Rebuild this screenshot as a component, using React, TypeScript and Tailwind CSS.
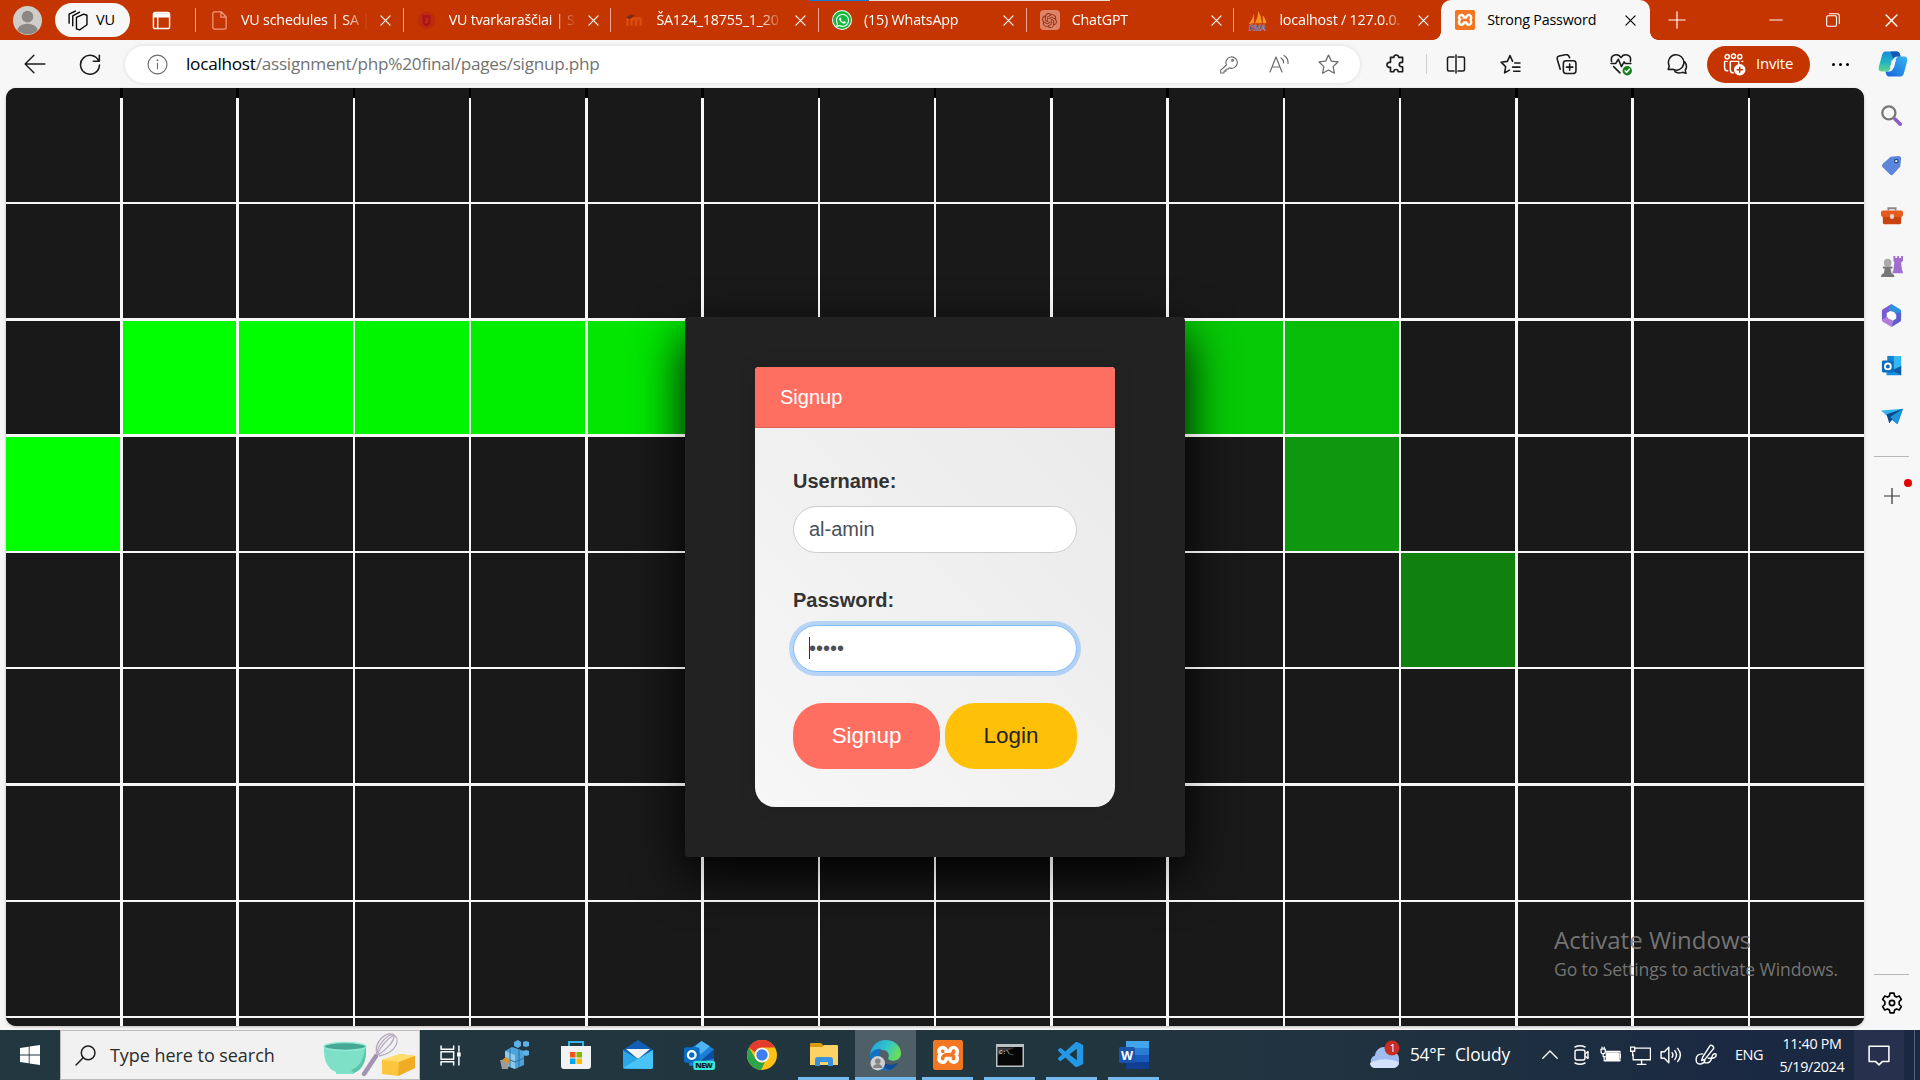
import React from "react";
import { FaWhatsapp } from "react-icons/fa";
import { VscVscode } from "react-icons/vsc";
import { SiOpenai, SiXampp } from "react-icons/si";

type P = { children?: React.ReactNode; s?: number; w?: number; className?: string; box?: string };

function Line({ children, s = 20, w = 1.4, className = "", box = "0 0 20 20" }: P) {
  return (
    <svg width={s} height={s} viewBox={box} fill="none" stroke="currentColor" strokeWidth={w} strokeLinecap="round" strokeLinejoin="round" className={`shrink-0 ${className}`}>
      {children}
    </svg>
  );
}

function Art({ children, s = 24, box = "0 0 24 24", className = "" }: P) {
  return (
    <svg width={s} height={s} viewBox={box} className={`shrink-0 ${className}`}>
      {children}
    </svg>
  );
}

const X = ({ s = 11 }: { s?: number }) => (
  <Line s={s} w={1.3} box="0 0 12 12"><path d="M1 1l10 10M11 1L1 11" /></Line>
);

const Xampp = ({ s }: { s: number }) => (
  <span className="grid place-items-center rounded-[3px] bg-[radial-gradient(circle,#fff_58%,#f37623_60%)]">
    <SiXampp size={s} color="#f37623" />
  </span>
);

const tabs = [
  {
    title: "VU schedules | SA |",
    icon: <Line s={19} w={1.3} className="text-[#ef9a80]"><path d="M4 1h8l5 5v11.500a1.500 1.500 0 0 1-1.500 1.500h-11A1.500 1.500 0 0 1 3 17.500v-15A1.500 1.500 0 0 1 4.500 1zM11.500 1v5.500H17" /></Line>,
  },
  {
    title: "VU tvarkaraščiai | S",
    icon: <Art s={19}><circle cx="12" cy="12" r="11" fill="#bd2a0c" /><path d="M7 5h10v8c0 4-2 5-5 7-3-2-5-3-5-7z" fill="#a8141b" /><path d="M9.500 8l3 1 2-1v6l-3 2-2-2 2-2z" fill="#c32b1c" /></Art>,
  },
  {
    title: "ŠA124_18755_1_20",
    icon: <Art s={20}><path d="M4 19v-6c0-4 5-4 5 0v6M9 19v-6c0-4 5.500-4 5.500 0v6M14.500 19v-6c0-4 5.500-4 5.500 0v6" fill="none" stroke="#dd4b0d" strokeWidth="3" /><path d="M2 9l7-4 4 2-6 4z" fill="#7b2c14" /></Art>,
  },
  {
    title: "(15) WhatsApp",
    icon: <span className="grid size-5 place-items-center rounded-full bg-white"><span className="grid size-[18px] place-items-center rounded-full bg-[#12b93d] text-white"><FaWhatsapp size={15} /></span></span>,
  },
  { title: "ChatGPT", icon: <span className="grid size-5 place-items-center rounded bg-[#df8469] text-[#8f3018]"><SiOpenai size={15} /></span> },
  {
    title: "localhost / 127.0.0.",
    icon: <Art s={21}><path d="M2 16Q7 10 8 4v11zM9 15Q13 8 13 1q4 7 4 14zM18 15V6q4 5 4 9z" fill="#f6921e" /><text x="2" y="23.500" fontSize="10" fontWeight="700" fontStyle="italic" fontFamily="Liberation Sans" textLength="20" fill="#3f4173" stroke="#d9d3e0" strokeWidth="0.300">PMA</text></Art>,
  },
];

function TabBar() {
  return (
    <header className="relative flex h-10 shrink-0 items-center bg-[#c43501] text-white">
      <div className="absolute top-0 left-[809px] flex h-px w-[301px] bg-[#e6dbd6]"><i className="w-[60px] bg-[#1477d4]" /></div>
      <Art s={29} box="0 0 30 30" className="ml-[13px]">
        <circle cx="15" cy="15" r="15" fill="#cfcdca" /><circle cx="15" cy="11" r="6" fill="#8b8784" />
        <path d="M4.500 25c1-9 20-9 21 0A15 15 0 0 1 4.500 25z" fill="#8b8784" />
      </Art>
      <div className="ml-[13px] flex h-[34px] w-[75px] items-center gap-2 rounded-full bg-[#f7f7f7] pl-3 text-[14.500px] text-black">
        <Line s={21} w={1.3}><path d="M9 7l7-3 3 1v9l-7 5-3-1zM9 7v11M5.500 15V5.500L12 2M2 12.500V4l6-3" /></Line>
        <span className="tracking-[-0.200px]">VU</span>
      </div>
      <Line s={19} w={1.5} className="ml-[22px]"><rect x="1.500" y="1.500" width="17" height="17" rx="2" /><path d="M2 3h16v3H2z" fill="currentColor" /><path d="M6 6v12" /></Line>
      <div className="ml-[24px] flex h-full">
        {tabs.map((t) => (
          <div key={t.title} className="flex h-full w-[207.700px] items-center">
            <i className="h-6 w-px bg-[#e9a893]" />
            <span className="ml-3 grid w-[22px] shrink-0 place-items-center">{t.icon}</span>
            <span className="ml-[11px] w-[133px] overflow-hidden pb-px text-[14.300px] tracking-[-0.200px] whitespace-nowrap [mask-image:linear-gradient(to_right,#000_103px,transparent_128px)]">{t.title}</span>
            <span className="ml-1.5"><X /></span>
          </div>
        ))}
      </div>
      <div className="relative flex h-10 w-[209px] items-center rounded-t-[10px] bg-[#f7f7f7] text-black">
        <i className="absolute bottom-0 -left-2 size-2 bg-[radial-gradient(circle_at_0_0,transparent_7.500px,#f7f7f7_8px)]" />
        <i className="absolute -right-2 bottom-0 size-2 bg-[radial-gradient(circle_at_100%_0,transparent_7.500px,#f7f7f7_8px)]" />
        <span className="ml-[14px]"><Xampp s={20} /></span>
        <span className="ml-3 w-[130px] pb-px text-[14.300px] tracking-[-0.200px] whitespace-nowrap">Strong Password</span>
        <span className="ml-[8px]"><X /></span>
      </div>
      <Line s={18} w={1.3} className="ml-[18px]"><path d="M10 1v18M1 10h18" /></Line>
      <Line s={14} w={1.4} className="ml-[83px]"><path d="M1 10h18" /></Line>
      <Line s={14} w={1.6} className="ml-[43px]"><rect x="1" y="4" width="14" height="15" rx="2" /><path d="M5 1h11q3 0 3 3v11" /></Line>
      <span className="ml-[45px]"><X s={13} /></span>
    </header>
  );
}

const slot = "grid h-8 w-[55.300px] place-items-center";

function AddressBar() {
  return (
    <div className="flex h-12 shrink-0 items-center bg-[#f7f7f7] text-[#1b1b1b]">
      <Line s={22} w={1.3} className="ml-[24px]"><path d="M19 10H1M9 2l-8 8 8 8" /></Line>
      <Line s={22} w={1.4} className="ml-[33px]"><path d="M18 7.500A8.600 8.600 0 1 0 18.600 11M18.500 2v5.500H13" /></Line>
      <div className="ml-[24px] flex h-[37px] w-[1235px] items-center rounded-full bg-white text-[#6b6b6b] shadow-[0_0_4px_rgba(0,0,0,.12)]">
        <Line s={21} w={1.1} className="ml-[22px]"><circle cx="10" cy="10" r="9" /><path d="M10 9v5" /><circle cx="10" cy="6" r=".4" /></Line>
        <div className="ml-[18px] flex-1 text-[17.200px] tracking-[-0.260px] whitespace-nowrap text-[#737373]"><span className="text-black">localhost</span>/assignment/php%20final/pages/signup.php</div>
        <Line s={19} w={1.2} className="mr-[31px]"><path d="M7.500 10.500a6 6 0 1 1 3 3L9 15H7v2H5v2H1.500v-3z" transform="translate(.3 0)" /><circle cx="14.300" cy="5.500" r="1" /></Line>
        <Line s={20} w={1.2} className="mr-[29px]"><path d="M1 18L7 3l6 15M3 13h8M12 4q3 2 2.500 5M15 1.500q4.500 3 4 8" /></Line>
        <Line s={21} w={1.2} className="mr-[21px]"><path d="M10 1l2.700 5.800 6.300.8-4.600 4.400 1.200 6.300L10 15.200l-5.600 3.100L5.600 12 1 7.600l6.300-.8z" /></Line>
      </div>
      <Line s={22} w={1.5} className="ml-[25px]"><path d="M5 4h3a2.200 2.200 0 1 1 4.400 0H16v4.500h-1a2 2 0 1 0 0 4h1V17h-4a2 2 0 1 0-4 0H5v-4H4a2.200 2.200 0 1 1 0-4.500h1z" /></Line>
      <i className="ml-[19px] h-5 w-px bg-[#cfcfcf]" />
      <div className="ml-px flex items-center">
        <span className={slot}><Line s={20} w={1.5}><path d="M8 3H3a1.500 1.500 0 0 0-1.500 1.500v11A1.500 1.500 0 0 0 3 17h5M12 3h5a1.500 1.500 0 0 1 1.500 1.500v11A1.500 1.500 0 0 1 17 17h-5M10 1v18" /></Line></span>
        <span className={slot}><Line s={21} w={1.5}><path d="M12 7L9.500 1.500 7 7l-6 .8 4.400 4.200-1 6L9 15.300M14 8.500h5M12 12.500h7M13 16.500h6" /></Line></span>
        <span className={slot}><Line s={21} w={1.5}><rect x="7" y="6.500" width="12" height="12" rx="2.500" /><path d="M13 9.500v6M10 12.500h6M4 14.500L1.200 5A2.500 2.500 0 0 1 3 2l7-1.500q2 0 3 3" /></Line></span>
        <span className={slot}>
          <Line s={23} w={1.5} box="0 0 22 22"><path d="M1.500 8C0 1 8 0 10.500 4.500 13 0 21 1 19.500 8M1 10h4.500L8 6l3 7 2.500-4.500 1 1.500H20M3.500 13l6 6" /><circle cx="16.500" cy="17" r="4.500" fill="#13801a" stroke="none" /><path d="M14.500 17l1.500 1.500 2.500-3" stroke="#fff" /></Line>
        </span>
        <span className={slot}><Line s={22} w={1.4}><path d="M2 15l1-3.200A7 7 0 1 1 6 14.800zM17 8q3 4 .5 7.500l.7 3-3.500-.9Q11 19 8 17" /></Line></span>
      </div>
      <div className="ml-[2.500px] flex h-[37px] w-[103px] items-center rounded-full bg-[#c43501] text-[15px] tracking-[-0.200px] text-white">
        <Line s={23} w={1.4} className="ml-4" box="0 0 22 22"><circle cx="4" cy="3.500" r="2" /><circle cx="10" cy="3" r="2" /><circle cx="16" cy="3.500" r="2" /><path d="M7 8h8v3M7 8v8q0 3 3 3M4 8H1.500v6q0 3 3 3M18 8h1" /><circle cx="16" cy="16" r="5.500" fill="#fff" stroke="none" /><path d="M16 13.500v5M13.500 16h5" stroke="#c43501" /></Line>
        <span className="ml-2.5 pb-px">Invite</span>
      </div>
      <div className="ml-[22px] flex gap-[4px]"><i className="size-[3px] rounded-full bg-black" /><i className="size-[3px] rounded-full bg-black" /><i className="size-[3px] rounded-full bg-black" /></div>
      <Art s={30} className="ml-[29px]">
        <defs>
          <linearGradient id="ca" x1="0" y1="0" x2="0" y2="1"><stop stopColor="#1689d8" /><stop offset=".5" stopColor="#20b2c4" /><stop offset="1" stopColor="#5ed68b" /></linearGradient>
          <linearGradient id="cb" x1="0" y1="1" x2="1" y2="0"><stop stopColor="#1762dc" /><stop offset="1" stopColor="#38b5f4" /></linearGradient>
        </defs>
        <path d="M6 2h9q2 0 2.700 2.500L18 6h-3q-2.500 0-3.300 3L10 15q-.8 3-3 3H3Q-.5 18 1 13L3.200 5Q4 2 6 2z" fill="url(#ca)" />
        <path d="M18 22H9q-2 0-2.700-2.500L6 18h3q2.500 0 3.300-3L14 9q.8-3 3-3h4q3.500 0 2 5l-2.200 8q-.8 3-2.800 3z" fill="url(#cb)" />
        <path d="M10 2h5q2 0 2.700 2.500L18 6h-3q-2 0-2.800 2z" fill="#1556b8" />
        <path d="M11 9h3.200L12.800 15H9.600z" fill="#f7f7f7" />
      </Art>
    </div>
  );
}

const gridTemplate =
  "absolute inset-0 grid grid-cols-[117px_116px_116px_116px_117px_116px_116px_116px_117px_116px_116px_116px_117px_116px_116px_115px] grid-rows-[10px_106px_117px_116px_116px_116px_117px_116px_116px_8px]";
const thickCols = [0, 1, 4, 5, 8, 9, 12, 13];
const rowBorders = ["border-b-0", "border-b-2", "border-b-3", "border-b-3", "border-b-2", "border-b-2", "border-b-3", "border-b-2", "border-b-2", "border-b-0"];
const lit: Record<string, string> = {
  "3-1": "bg-[#00ff00]", "3-2": "bg-[#00fd00]", "3-3": "bg-[#00f600]", "3-4": "bg-[#00ee00]", "3-5": "bg-[#02e602]",
  "3-10": "bg-[#06ca06]", "3-11": "bg-[#08bd08]", "4-0": "bg-[#00ff00]", "4-11": "bg-[#0f970f]", "5-12": "bg-[#10800f]",
};
const cells = Array.from({ length: 160 }, (_, i) => ({ r: Math.floor(i / 16), c: i % 16 }));

function Tiles({ overlay }: { overlay?: boolean }) {
  return (
    <div className={gridTemplate}>
      {cells.map(({ r, c }) => (
        <i
          key={`${r}-${c}`}
          className={`${c === 15 ? "border-r-0" : thickCols.includes(c) ? "border-r-3" : "border-r-2"} ${rowBorders[r]} ${
            overlay ? (r === 0 ? "border-transparent" : "border-[#f7f7f7]/70") : `${r === 0 ? "border-black" : "border-[#f7f7f7]"} ${lit[`${r}-${c}`] ?? "bg-[#191919]"}`
          }`}
        />
      ))}
    </div>
  );
}

function SignupCard() {
  const label = "text-[20px] leading-[30px] font-bold text-[#333]";
  const field = "flex h-[47px] items-center rounded-[25px] border bg-white px-[15px] pb-[2px] text-[20px] text-[#495057]";
  return (
    <section className="relative flex h-[540px] w-[500px] justify-center rounded bg-[#222] pt-[50px] font-['Liberation_Sans',sans-serif]">
      <div className="h-[440px] w-[360px] overflow-hidden rounded-t rounded-b-[20px] bg-[linear-gradient(45deg,#f7f7f7,#e9e9e9)] shadow-[0_0_20px_rgba(0,0,0,.1)]">
        <div className="flex h-[61px] items-center border-b border-[#df6256] bg-[#ff6f61] px-[25px] text-[20px] text-white">Signup</div>
        <div className="px-[38px] pt-[38px]">
          <div className={label}>Username:</div>
          <div className={`${field} mt-[10px] border-[#ccc]`}>al-amin</div>
          <div className={`${label} mt-[32px]`}>Password:</div>
          <div className={`${field} mt-[10px] border-[#80bdff] shadow-[0_0_0_4px_rgba(0,123,255,.25)]`}>
            <i className="h-[22px] w-px bg-[#333]" />
            <span className="-ml-px">•••••</span>
          </div>
          <div className="mt-[31px] flex gap-[5px] text-[22.400px]">
            <div className="grid h-[66px] w-[147px] place-items-center rounded-[30px] bg-[#ff6f61] pb-px text-white">Signup</div>
            <div className="grid h-[66px] w-[132px] place-items-center rounded-[30px] bg-[#ffc107] pb-px text-[#212529]">Login</div>
          </div>
        </div>
      </div>
    </section>
  );
}

function Sidebar() {
  const item = "grid h-[50.200px] w-full place-items-center";
  return (
    <aside className="flex h-full flex-1 flex-col items-center bg-[#f7f7f7] pt-[2px] pr-px">
      <span className={item}><Art s={21}><circle cx="9" cy="9" r="7.500" fill="none" stroke="#777" strokeWidth="2.600" /><path d="M16 16l6 6" stroke="#8c5cc4" strokeWidth="4" strokeLinecap="round" /></Art></span>
      <span className={item}><Art s={21}><path d="M11 2l9-1q3 0 3 3l-1 9-8 9q-2 2-4 0l-8-8q-2-2 0-4z" fill="#5b86dc" /><circle cx="17.500" cy="7" r="2" fill="#fff" stroke="#274a9b" strokeWidth="1.500" /></Art></span>
      <span className={`${item} pt-0.5`}><Art s={22}><path d="M8 6V3.500h8V6" fill="none" stroke="#888" strokeWidth="2" /><rect x="2" y="7" width="20" height="14" rx="2" fill="#c8430e" /><rect x="0" y="6" width="24" height="7" rx="2" fill="#e65c1e" /><rect x="10" y="10" width="4" height="5" rx="1" fill="#ddd" /></Art></span>
      <span className={`${item} pt-0.5`}><Art s={23}><path d="M14 1h2v2h2V1h2v2h2V1h2v5l-2 2 1 8q1 1 1 3H13q0-2 1-3l1-8-1-2z" fill="#a06ed0" /><circle cx="8" cy="8" r="4" fill="#aaa" /><path d="M3 12h10v2h-2l1 5q3 1 3 4H1q0-3 3-4l1-5H3z" fill="#777" /></Art></span>
      <span className={item}>
        <Art s={23}>
          <path d="M12 0L3 5.500q-1 .6-1 2V17l5-3V9.500L15 5z" fill="#7a5bd0" />
          <path d="M12 0l9 5.500q1 .6 1 2V14l-6-3.500L8.500 6z" fill="#2f94dc" />
          <path d="M22 9v8q0 1-1 1.600L12 24l-1-5 6-4V9z" fill="#5a5fc9" />
          <path d="M2 17l6-3.500 6 4.500-2 6-9-5.400Q2 18 2 17z" fill="#b07bdb" />
          <circle cx="12" cy="12" r="4.200" fill="#fff" />
        </Art>
      </span>
      <span className={item}><Art s={22}><path d="M7 1h15v11l-8 5-7-5z" fill="#35b8f1" /><path d="M7 1h7v6H7z" fill="#1683cf" /><path d="M22 12v10H6v-3z" fill="#1490df" /><path d="M22 12L12 17l10 5z" fill="#0f5da8" /><rect x="1" y="6" width="13" height="13" rx="1.500" fill="#0a6cc0" /><circle cx="7.500" cy="12.500" r="3.200" fill="none" stroke="#fff" strokeWidth="2" /></Art></span>
      <span className={item}><Art s={22}><path d="M0 6l24-2-15 10z" fill="#35b5ee" /><path d="M9 14L24 4l-6 17z" fill="#0d77ca" /><path d="M6 10l3 10 4-5 11-11z" fill="#0b4c88" /><path d="M10 13L24 4l-6 17z" fill="#1d95dd" /></Art></span>
      <i className="mt-[15px] h-px w-[35px] bg-[#b9b9b9]" />
      <div className="relative mt-[31px] text-[#333]"><Line s={16} w={1.5}><path d="M10 0v20M0 10h20" /></Line><i className="absolute -top-[9px] left-[20px] size-2 rounded-full bg-[#e60000]" /></div>
      <i className="mt-auto h-px w-[35px] bg-[#b9b9b9]" />
      <Line s={22} w={1.5} className="mt-[17px] mb-[16px]"><circle cx="10" cy="10" r="2.400" /><path d="M8.200 1h3.600l.6 2.700 1.600.9 2.700-.9 1.800 3.100-2 1.900v2.600l2 1.900-1.800 3.100-2.700-.9-1.600.9-.6 2.700H8.200l-.6-2.700-1.600-.9-2.700.9-1.800-3.100 2-1.900V8.700l-2-1.900 1.800-3.100 2.700.9 1.600-.9z" /></Line>
    </aside>
  );
}

const apps: { icon: React.ReactNode; open?: boolean; active?: boolean }[] = [
  { icon: <Art s={30} box="0 0 30 30"><path d="M6 11l7-4 12 4v14l-9 4-10-4z" fill="#4ea3dc" /><path d="M6 11l10 4v14L6 25z" fill="#8cc9ee" /><path d="M6 18l10 4 9-4M11 9v18M20 9v18" stroke="#2d6f9f" fill="none" /><path d="M15 2l4-2 3 2v4l-3 2-4-2zM24 2l3-1 3 1v4l-3 1-3-1zM24 11l3-1 3 1v4l-3 1-3-1z" fill="#5cb0e6" /><path d="M1 20h9l-1 9H3z" fill="#9b9b9b" /><path d="M3 20l4-3 4 3-2 4z" fill="#d3932d" /></Art> },
  { icon: <Art s={30} box="0 0 30 30"><path d="M8 7V2h14v5" fill="none" stroke="#33b6e8" strokeWidth="2" /><path d="M0 6h30v20q0 3-3 3H3q-3 0-3-3z" fill="#f2f2f2" /><path d="M9 12h5.500v5.500H9z" fill="#f25022" /><path d="M15.500 12H21v5.500h-5.500z" fill="#7fba00" /><path d="M9 18.500h5.500V24H9z" fill="#00a4ef" /><path d="M15.500 18.500H21V24h-5.500z" fill="#ffb900" /></Art> },
  { icon: <Art s={30} box="0 0 30 30"><path d="M0 10L15 0l15 10-15 9z" fill="#0f5fb4" /><path d="M3 9h24L15 19z" fill="#f3f3f3" /><path d="M0 10l15 9 15-9v17q0 2-2 2H2q-2 0-2-2z" fill="#28a8ea" /><path d="M0 28L30 10v17q0 2-2 2z" fill="#49c3f5" /></Art> },
  { icon: <Art s={31} box="0 0 30 30"><path d="M5 9L17 1l12 8v16H5z" fill="#1c7fd6" /><path d="M11 6l6-5 8 5-9 8z" fill="#4fb4f0" /><path d="M29 9v9L14 22z" fill="#0b4da0" /><rect x="0" y="7" width="15" height="15" rx="2" fill="#0a6cc4" /><circle cx="7.500" cy="14.500" r="3.700" fill="none" stroke="#fff" strokeWidth="2.200" /><rect x="9" y="20" width="21" height="9" rx="2" fill="#37e6d6" /><text x="11" y="27.300" fontSize="7.500" fontWeight="800" fontFamily="Open Sans" textLength="17" fill="#10222c">NEW</text></Art> },
  { icon: <Art s={30} box="0 0 30 30"><circle cx="15" cy="15" r="15" fill="#fbc116" /><path d="M2 7.500A15 15 0 0 1 28 7.500H15a7.500 7.500 0 0 0-7 5z" fill="#e33b2e" /><path d="M2 7.500l6.500 11.300A7.500 7.500 0 0 0 18 22l-4 8A15 15 0 0 1 2 7.500z" fill="#2da34b" /><circle cx="15" cy="15" r="7.300" fill="#fff" /><circle cx="15" cy="15" r="5.700" fill="#3f7ef0" /></Art> },
  { open: true, icon: <Art s={30} box="0 0 30 30"><path d="M1 4q0-1 1-1h10l3 3v4H1z" fill="#d99a0c" /><path d="M1 7h12l2-2h13q1 0 1 1v19H1z" fill="#fdd264" /><path d="M6 26v-6q0-3 3-3h12q3 0 3 3v6h-5v-4h-8v4z" fill="#3793dd" /></Art> },
  {
    open: true, active: true,
    icon: (
      <Art s={31} box="0 0 30 30">
        <defs><linearGradient id="eg" x1="0" y1="0" x2="1" y2=".4"><stop stopColor="#1e9be0" /><stop offset=".6" stopColor="#33c6c9" /><stop offset="1" stopColor="#67dd5d" /></linearGradient></defs>
        <path d="M15 0c9 0 15 6 15 13 0 5-4 7-8 7-4 0-5-1.500-4-3.500 1-4-2-7-7-7-6 0-10 4-11 7C0 6 7 0 15 0z" fill="url(#eg)" />
        <path d="M0 15c1-4 5-7 11-6.500-3 3-4 14 7 18l4 1c-9 5-22 0-22-12.500z" fill="#1273c4" />
        <path d="M11 16c0 7 7 10 16 6-2 4-5 6-8 7-6-1-9-7-8-13z" fill="#114d94" />
        <circle cx="7.500" cy="22.500" r="7" fill="#cfcfcf" /><circle cx="7.500" cy="20.500" r="2.700" fill="#848484" /><path d="M3 27c0-5 9-5 9 0z" fill="#848484" />
      </Art>
    ),
  },
  { open: true, icon: <Xampp s={30} /> },
  { open: true, icon: <Art s={28} box="0 0 28 28"><rect x="0" y="3" width="28" height="23" fill="#bcc1c6" /><rect x="1.500" y="6" width="25" height="18.500" fill="#060606" /><path d="M2 6.500h17L2 14z" fill="#3c3c3c" /><text x="3" y="12.500" fontSize="6" fontFamily="Liberation Mono" fill="#eee">C:\_</text></Art> },
  { open: true, icon: <VscVscode size={31} color="#2298e6" /> },
  { open: true, icon: <Art s={30} box="0 0 30 30"><path d="M7 1h23v8H7z" fill="#41a5ee" /><path d="M7 8h23v7H7z" fill="#2b7cd3" /><path d="M7 15h23v7H7z" fill="#185abd" /><path d="M7 22h23v7H7z" fill="#103f91" /><rect x="0" y="7" width="16" height="16" rx="1.500" fill="#1a52ac" /><text x="2" y="19.500" fontSize="12.500" fontWeight="700" fontFamily="Open Sans" textLength="12" fill="#fff">W</text></Art> },
];

function Taskbar() {
  return (
    <footer className="flex h-[50px] shrink-0 bg-[linear-gradient(90deg,#22373f_0%,#21353f_58%,#1f3140_75%,#1a2842_92%,#1b2842_100%)] text-white">
      <div className="grid w-[60px] place-items-center"><Art s={20}><path d="M0 3.500L10.500 2v9.500H0zM11.500 1.800L24 0v11.500H11.500zM0 12.500h10.500V22L0 20.500zM11.500 12.500H24V24l-12.500-1.800z" fill="#fff" /></Art></div>
      <div className="flex w-[360px] items-center border border-[#bcbcbc] bg-[#f1f1f1] text-[#1c1c1c]">
        <Line s={21} w={1.4} className="ml-[14px]"><circle cx="12.500" cy="7.500" r="6.500" /><path d="M8 12l-7 7" /></Line>
        <span className="ml-[14px] w-[200px] text-[18px] tracking-[-0.050px] whitespace-nowrap text-[#2b2b2b]">Type here to search</span>
        <svg width="94" height="46" viewBox="0 0 94 46" className="ml-[13px] shrink-0">
          <path d="M1 15h42q1 20-12 25v2H13v-2Q0 35 1 15z" fill="#7fe0c8" /><path d="M28 38q12-4 14-22h1q1 20-12 25z" fill="#5cc4ab" /><ellipse cx="22" cy="14.500" rx="21" ry="4" fill="#46a892" stroke="#8fe9d4" strokeWidth="1.500" />
          <path d="M41 42L53 24" stroke="#a392b6" strokeWidth="4.500" strokeLinecap="round" />
          <g fill="none" stroke="#b6aabf" strokeWidth="1.300"><path d="M54 23C50 10 64-2 71 3s2 18-15 21" /><path d="M54 23C54 12 66 1 71 3M55 23C63 18 72 9 71 3M54 23C58 14 64 7 71 3" /></g>
          <path d="M59 28l18-6 15 2v12l-17 8-16-2z" fill="#fbc53c" /><path d="M59 28l18-6 15 2-16 6z" fill="#ffdd68" /><path d="M76 30l16-6v12l-17 8z" fill="#f0ac24" />
        </svg>
      </div>
      <div className="grid w-[61px] place-items-center"><Line s={21} w={1.4}><path d="M1 1v3h12V1M1 19v-3h12v3M1 6.500h12v7H1zM18 1v5M18 12v7" /><path d="M17 7.500h2v3h-2z" fill="currentColor" /></Line></div>
      <div className="flex gap-px pl-[2px]">
        {apps.map((a, i) => (
          <div key={i} className={`flex w-[61px] flex-col items-center ${a.active ? "bg-[#4f5f67]" : ""}`}>
            <div className="grid h-[47px] place-items-center pt-[3px]">{a.icon}</div>
            {a.open && <i className={`h-[3px] bg-[#76b9ed] ${a.active ? "w-full" : "w-[51px]"}`} />}
          </div>
        ))}
      </div>
      <div className="ml-[204.500px] flex items-center">
        <svg width="32" height="30" viewBox="0 0 32 30"><path d="M7 28a6.500 6.500 0 0 1-1-12.500C7 6 19 4 22 12c5-1 9 4 8 9q0 7-7 7z" fill="#9fbcf0" /><path d="M5 28q-4-1-4-5 14-7 29-1 0 6-7 6z" fill="#d5e2fb" /><circle cx="23" cy="8" r="7.500" fill="#c72d22" /><text x="20.500" y="12" fontSize="11" fontFamily="Open Sans" fill="#fff">1</text></svg>
        <span className="ml-[9.500px] w-[45px] text-[17.300px] tracking-[-0.300px]">54°F</span><span className="w-[60px] text-[17.300px] tracking-[-0.050px]">Cloudy</span>
      </div>
      <div className="ml-[27px] flex items-center">
        <Line s={16} w={1.7}><path d="M1 14l9-9 9 9" /></Line>
        <Line s={20} w={1.4} className="ml-[13px]"><rect x="4" y="5" width="10" height="10" rx="2" /><path d="M14 9l3-2.500v7L14 11M4 2q5-2.500 10 0M4 18q5 2.500 10 0" /></Line>
        <Line s={21} w={1.2} className="ml-[9px]"><path d="M6 6h13v9H4v-4" /><path d="M6 7.500h11.500v6.500H6z" fill="currentColor" /><path d="M19.500 9v3M1 4h4v3q-2 3-4 0zM2 4V2M4 4V2M3 8v3h2" /></Line>
        <Line s={21} w={1.3} className="ml-[9px]"><path d="M5 3h14.500v11H3V9M11 14v4M7 18.500h8M.5 2h4v4h-4zM2.500 6v4" /></Line>
        <Line s={22} w={1.3} className="ml-[9px]"><path d="M1 7h3l4-4v14l-4-4H1zM11 8q1.500 2 0 4M13.500 6q3 4 0 8M16 4q5 6 0 12" /></Line>
        <Line s={22} w={1.3} className="ml-[13px]"><path d="M7 12L14 1q3 0 3 3l-8 10-3 1zM7 9Q1 9 1 14t5 4q3-1 3-4M9 17q5 1 6-4t4-4q1 3-3 4h-4" /></Line>
        <span className="ml-[18px] w-[29px] text-[14.500px] tracking-[-0.500px]">ENG</span>
        <div className="ml-[12px] w-[72px] text-center text-[14.300px] leading-[23px] tracking-[-0.300px] whitespace-nowrap"><div>11:40 PM</div><div>5/19/2024</div></div>
      </div>
      <div className="ml-auto grid w-[50px] place-items-center bg-[#27314d]"><Line s={22} w={1.4}><path d="M1 2h18v14h-6l-3 3-3-3H1z" /></Line></div>
      <i className="mr-[5px] ml-[10px] w-px bg-[#59647a]" />
    </footer>
  );
}

export default function App() {
  return (
    <div className="flex h-[1080px] w-[1920px] flex-col overflow-hidden bg-[#f7f7f7] font-['Open_Sans','Noto_Sans',sans-serif]">
      <TabBar />
      <AddressBar />
      <div className="flex h-[942px] shrink-0">
        <main className="relative ml-1.5 h-[938px] w-[1858px] overflow-hidden rounded-[10px] bg-[#191919] shadow-[0_1px_3px_rgba(0,0,0,.25)]">
          <Tiles />
          <div className="absolute top-[229px] left-[679px] h-[540px] w-[500px] rounded shadow-[0_18px_50px_rgba(0,0,0,1)]" />
          <Tiles overlay />
          <div className="absolute top-[229px] left-[679px]"><SignupCard /></div>
          <div className="absolute top-[835px] left-[1548px] whitespace-nowrap text-[#808080]/90">
            <div className="text-[24px] leading-[34px]">Activate Windows</div>
            <div className="text-[17.600px] leading-[25px] tracking-[-0.120px]">Go to Settings to activate Windows.</div>
          </div>
        </main>
        <Sidebar />
      </div>
      <Taskbar />
    </div>
  );
}
